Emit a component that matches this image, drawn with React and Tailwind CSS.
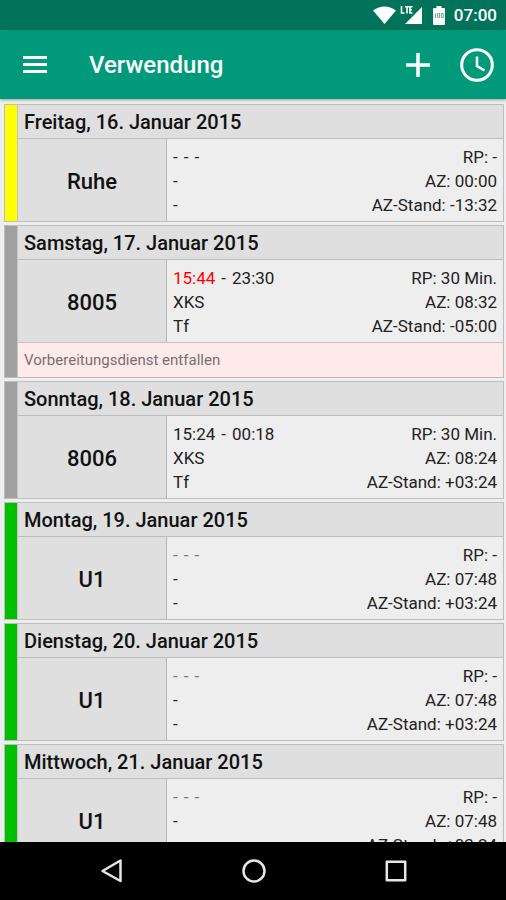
const days = [
  { date: 'Freitag, 16. Januar 2015', name: 'Ruhe', color: 'bg-[#ffff00]', from: '-', to: '-', place: '-', role: '-', rp: '-', az: '00:00', stand: '-13:32' },
  {
    date: 'Samstag, 17. Januar 2015',
    name: '8005',
    color: 'bg-[#a0a0a0]',
    from: '15:44',
    to: '23:30',
    changed: true,
    place: 'XKS',
    role: 'Tf',
    rp: '30 Min.',
    az: '08:32',
    stand: '-05:00',
    note: 'Vorbereitungsdienst entfallen',
  },
  { date: 'Sonntag, 18. Januar 2015', name: '8006', color: 'bg-[#a0a0a0]', from: '15:24', to: '00:18', place: 'XKS', role: 'Tf', rp: '30 Min.', az: '08:24', stand: '+03:24' },
  { date: 'Montag, 19. Januar 2015', name: 'U1', color: 'bg-[#00c000]', from: '-', to: '-', faded: true, place: '-', role: '-', rp: '-', az: '07:48', stand: '+03:24' },
  { date: 'Dienstag, 20. Januar 2015', name: 'U1', color: 'bg-[#00c000]', from: '-', to: '-', faded: true, place: '-', role: '-', rp: '-', az: '07:48', stand: '+03:24' },
  { date: 'Mittwoch, 21. Januar 2015', name: 'U1', color: 'bg-[#00c000]', from: '-', to: '-', faded: true, place: '-', role: '-', rp: '-', az: '07:48', stand: '+03:24' },
];

const StatusBar = () => (
  <div className="flex h-[30px] shrink-0 items-center justify-end bg-[#00735a] pr-[9px] text-white">
    <svg width="23" height="18" viewBox="0 0 23 18" fill="currentColor" aria-hidden="true">
      <path d="M0 4.500 Q11.500 -3.500 23 4.500 L11.500 18 Z" />
    </svg>
    <svg className="ml-[4px]" width="23" height="20" viewBox="0 0 23 20" aria-hidden="true">
      <path d="M22 2 V19 H5 Z" fill="currentColor" />
      <path d="M1.500 1 V8 H4.500 M5 1.700 H9 M7 1.700 V8.500 M12.500 1.700 H10 V8 H12.500 M10 4.800 H12" fill="none" stroke="#00735a" strokeWidth="3" />
      <path d="M1.500 1 V8 H4.500 M5 1.700 H9 M7 1.700 V8.500 M12.500 1.700 H10 V8 H12.500 M10 4.800 H12" fill="none" stroke="currentColor" strokeWidth="1.600" />
    </svg>
    <svg className="ml-[10px]" width="12" height="19" viewBox="0 0 12 19" aria-hidden="true">
      <path d="M3.500 0 H8.500 V2 H11 Q12 2 12 3 V18 Q12 19 11 19 H1 Q0 19 0 18 V3 Q0 2 1 2 H3.500 Z" fill="currentColor" />
      <path d="M2.500 7.500 V12 M4.500 7.500 H6.500 V11.500 H4.500 Z M8.300 7.500 H10.200 V11.500 H8.300 Z" fill="none" stroke="#6fa898" strokeWidth="1" />
    </svg>
    <span className="ml-[9px] text-[17px] leading-[20px] font-medium">07:00</span>
  </div>
);

const AppBar = () => (
  <header className="z-10 flex h-[69px] shrink-0 items-center bg-[#009a7b] pr-[12px] pl-[20px] text-white shadow-[0_1px_3px_rgba(0,0,0,0.35)]">
    <button type="button" aria-label="Menü" className="flex size-[30px] items-center justify-center">
      <svg width="24" height="17" viewBox="0 0 24 17" fill="currentColor" aria-hidden="true">
        <path d="M0 0 H24 V3 H0 Z M0 7 H24 V10 H0 Z M0 14 H24 V17 H0 Z" />
      </svg>
    </button>
    <h1 className="ml-[39px] flex-1 text-[24px] leading-[28px] font-medium">Verwendung</h1>
    <button type="button" aria-label="Hinzufügen" className="flex size-[34px] items-center justify-center">
      <svg width="24" height="24" viewBox="0 0 24 24" fill="none" stroke="currentColor" strokeWidth="3.500" aria-hidden="true">
        <path d="M12 0 V24 M0 12 H24" />
      </svg>
    </button>
    <button type="button" aria-label="Uhrzeit" className="ml-[25px] flex size-[34px] items-center justify-center">
      <svg width="34" height="34" viewBox="0 0 34 34" fill="none" stroke="currentColor" aria-hidden="true">
        <circle cx="17" cy="17" r="15.300" strokeWidth="3" />
        <path d="M17 8.500 V18 L24.500 22.500" strokeWidth="2.500" />
      </svg>
    </button>
  </header>
);

const DayCard = ({ day }) => (
  <li className="flex shrink-0 border border-[#bdbdbd] bg-[#eeeeee]">
    <div className={`w-[12px] shrink-0 ${day.color}`} />
    <div className="min-w-0 flex-1 border-l border-[#c4c4c4]">
      <h2 className="border-b border-[#bdbdbd] bg-[#dfdfdf] pt-[5px] pb-[4px] pl-[6px] text-[20px] leading-[24px] font-medium text-[#111111]">
        {day.date}
      </h2>
      <div className="flex">
        <div className="flex w-[149px] shrink-0 items-center justify-center border-r border-[#b5b5b5] bg-[#dfdfdf] pt-[3px] text-[22px] leading-[24px] font-medium text-[#111111]">
          {day.name}
        </div>
        <div className="flex flex-1 justify-between pt-[6px] pr-[6px] pb-[4px] pl-[6px] text-[17px] leading-[24px] text-[#222222]">
          <div>
            <p className={`flex gap-[6px] ${day.faded ? 'text-[#777777]' : ''}`}>
              <span className={day.changed ? 'text-[#ff0000]' : ''}>{day.from}</span>
              <span>-</span>
              <span>{day.to}</span>
            </p>
            <p>{day.place}</p>
            <p>{day.role}</p>
          </div>
          <div className="text-right">
            <p>RP: {day.rp}</p>
            <p>AZ: {day.az}</p>
            <p>AZ-Stand: {day.stand}</p>
          </div>
        </div>
      </div>
      {day.note && (
        <p className="border-t border-[#c8c0c0] bg-[#ffeaea] pt-[7px] pb-[6px] pl-[6px] text-[15px] leading-[21px] text-[#777070]">
          {day.note}
        </p>
      )}
    </div>
  </li>
);

const NavBar = () => (
  <nav className="flex h-[58px] shrink-0 items-center justify-center gap-[118px] bg-black pl-[2px] text-[#e6e6e6]">
    <button type="button" aria-label="Zurück" className="flex size-[24px] items-center justify-center">
      <svg width="24" height="24" viewBox="0 0 24 24" fill="none" stroke="currentColor" strokeWidth="2.500" strokeLinejoin="round" aria-hidden="true">
        <path d="M20.500 1.500 V22 L2.500 12 Z" />
      </svg>
    </button>
    <button type="button" aria-label="Startseite" className="flex size-[24px] items-center justify-center">
      <svg width="24" height="24" viewBox="0 0 24 24" fill="none" stroke="currentColor" strokeWidth="2.500" aria-hidden="true">
        <circle cx="12" cy="12" r="10.500" />
      </svg>
    </button>
    <button type="button" aria-label="Übersicht" className="flex size-[24px] items-center justify-center">
      <svg width="24" height="24" viewBox="0 0 24 24" fill="none" stroke="currentColor" strokeWidth="2.500" strokeLinejoin="round" aria-hidden="true">
        <rect x="2.800" y="2.800" width="18.400" height="18.400" />
      </svg>
    </button>
  </nav>
);

export default function App() {
  return (
    <div className="flex h-dvh flex-col bg-[#eeeeee] font-['Roboto',sans-serif]">
      <StatusBar />
      <AppBar />
      <main className="min-h-0 flex-1 overflow-hidden">
        <ul className="flex flex-col gap-[3px] pt-[5px] pr-[2px] pl-[4px]">
          {days.map((day) => (
            <DayCard key={day.date} day={day} />
          ))}
        </ul>
      </main>
      <NavBar />
    </div>
  );
}
